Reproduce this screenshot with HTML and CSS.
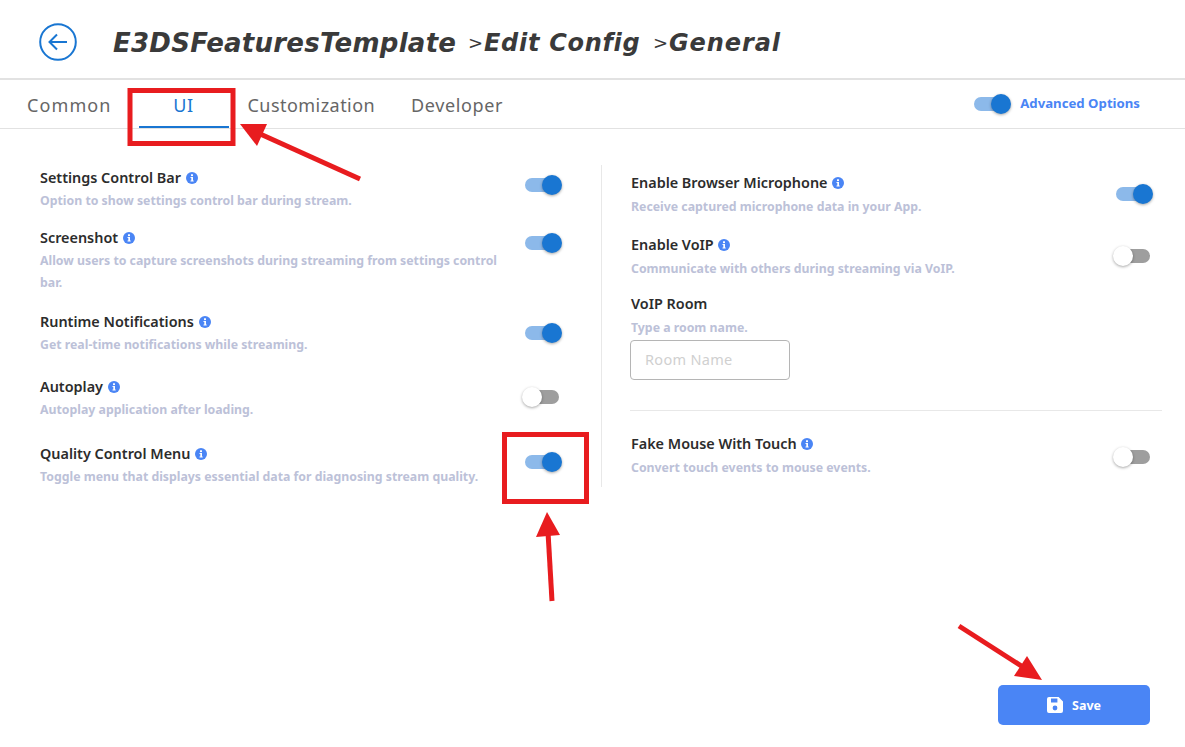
FILE: index.html
```html
<!DOCTYPE html>
<html lang="en">
<head>
    <meta charset="UTF-8">
    <title>Edit Config</title>
    <link rel="stylesheet" href="styles.css">
</head>
<body>
<svg class="defs" width="0" height="0">
    <symbol id="info" viewBox="0 0 12 12">
        <circle cx="6" cy="6" r="6" fill="#4a85f5"/>
        <rect x="5" y="2.3" width="2" height="1.8" fill="#fff"/>
        <path d="M4.5 5h2.5v3.6h.7v1H4.5v-1h.8V6h-.8z" fill="#fff"/>
    </symbol>
</svg>

<div class="page">
    <header class="header">
        <button class="back-btn">
            <svg width="38" height="38" viewBox="0 0 38 38" fill="none" stroke="#1976d2">
                <circle cx="19" cy="19" r="17.8" stroke-width="2"/>
                <path d="M28 19H11M18 11.5L10.5 19l7.5 7.5" stroke-width="2"/>
            </svg>
        </button>
        <h1 class="crumbs">
            <span class="crumb crumb-app">E3DSFeaturesTemplate</span>
            <span class="crumb-sep">&gt;</span>
            <span class="crumb crumb-edit">Edit Config</span>
            <span class="crumb-sep">&gt;</span>
            <span class="crumb crumb-general">General</span>
        </h1>
    </header>

    <nav class="tabs">
        <a class="tab tab-common">Common</a>
        <a class="tab tab-ui active">UI</a>
        <a class="tab tab-custom">Customization</a>
        <a class="tab">Developer</a>
        <div class="advanced">
            <span class="switch on"></span>
            <span class="advanced-label">Advanced Options</span>
        </div>
    </nav>

    <main class="content">
        <section class="col col-left">
            <div class="setting s1">
                <div class="setting-text">
                    <h4>Settings Control Bar <svg class="info"><use href="#info"/></svg></h4>
                    <p>Option to show settings control bar during stream.</p>
                </div>
                <span class="switch on"></span>
            </div>
            <div class="setting s2">
                <div class="setting-text">
                    <h4>Screenshot <svg class="info"><use href="#info"/></svg></h4>
                    <p>Allow users to capture screenshots during streaming from settings control bar.</p>
                </div>
                <span class="switch on"></span>
            </div>
            <div class="setting s3">
                <div class="setting-text">
                    <h4>Runtime Notifications <svg class="info"><use href="#info"/></svg></h4>
                    <p>Get real-time notifications while streaming.</p>
                </div>
                <span class="switch on"></span>
            </div>
            <div class="setting s4">
                <div class="setting-text">
                    <h4>Autoplay <svg class="info"><use href="#info"/></svg></h4>
                    <p>Autoplay application after loading.</p>
                </div>
                <span class="switch"></span>
            </div>
            <div class="setting s5">
                <div class="setting-text">
                    <h4>Quality Control Menu <svg class="info"><use href="#info"/></svg></h4>
                    <p>Toggle menu that displays essential data for diagnosing stream quality.</p>
                </div>
                <span class="switch on"></span>
            </div>
        </section>

        <section class="col col-right">
            <div class="setting r1">
                <div class="setting-text">
                    <h4>Enable Browser Microphone <svg class="info"><use href="#info"/></svg></h4>
                    <p>Receive captured microphone data in your App.</p>
                </div>
                <span class="switch on"></span>
            </div>
            <div class="setting r2">
                <div class="setting-text">
                    <h4>Enable VoIP <svg class="info"><use href="#info"/></svg></h4>
                    <p>Communicate with others during streaming via VoIP.</p>
                </div>
                <span class="switch"></span>
            </div>
            <div class="room">
                <h4>VoIP Room</h4>
                <p>Type a room name.</p>
                <input class="room-input" type="text" placeholder="Room Name">
            </div>
            <div class="setting r3">
                <div class="setting-text">
                    <h4>Fake Mouse With Touch <svg class="info"><use href="#info"/></svg></h4>
                    <p>Convert touch events to mouse events.</p>
                </div>
                <span class="switch"></span>
            </div>
        </section>
    </main>

    <footer class="footer">
        <button class="save-btn">
            <svg width="16" height="16" viewBox="0 0 16 16">
                <path fill-rule="evenodd" fill="#fff" d="M2 0h9.6L16 4.400V14a2 2 0 0 1-2 2H2a2 2 0 0 1-2-2V2a2 2 0 0 1 2-2zM4 1.600V5.600h6.400V1.600zM8 8.600a2.400 2.400 0 1 0 0 4.800 2.400 2.400 0 0 0 0-4.800z"/>
            </svg>
            Save
        </button>
    </footer>

    <!-- red markup drawn on top of the screenshot -->
    <svg class="markup" width="1185" height="747" viewBox="0 0 1185 747">
        <g fill="none" stroke="#e81c1f" stroke-width="5">
            <rect x="130" y="90.500" width="103" height="53"/>
            <rect x="504.500" y="434.500" width="82" height="67"/>
            <path d="M360 179L258 133"/>
            <path d="M552 601L548 532"/>
            <path d="M959 626L1026 669"/>
        </g>
        <g fill="#e81c1f">
            <path d="M240 124L267 124L257 146z"/>
            <path d="M547 512L536 537L560 535z"/>
            <path d="M1042 680L1027 656L1014 676z"/>
        </g>
    </svg>
</div>
</body>
</html>
```

FILE: styles.css
```css
* {
    box-sizing: border-box;
}
body {
    margin: 0;
    background-color: #fff;
    font-family: "Noto Sans", sans-serif;
}
.defs {
    position: absolute;
}
.page {
    position: relative;
    width: 1185px;
    height: 747px;
    display: flex;
    flex-direction: column;
    overflow: hidden;
}
.markup {
    position: absolute;
    left: 0;
    top: 0;
    pointer-events: none;
}

/* header */
.header {
    height: 80px;
    display: flex;
    align-items: center;
    padding: 5px 0 0 39px;
    border-bottom: 2px solid #e2e2e2;
}
.back-btn {
    width: 38px;
    height: 38px;
    padding: 0;
    border: none;
    background: none;
}
.crumbs {
    margin: 2px 0 0 36px;
    display: flex;
    align-items: center;
    font-family: "DejaVu Sans", sans-serif;
    font-size: 26px;
    font-style: italic;
    font-weight: 700;
    color: #3a3a3a;
}
.crumb-app {
    width: 343px;
    letter-spacing: 0.25px;
}
.crumb-edit {
    width: 157px;
    font-size: 24px;
    letter-spacing: 0.7px;
}
.crumb-general {
    font-size: 24px;
    letter-spacing: 0.9px;
}
.crumb-sep {
    width: 28px;
    padding-left: 12px;
    font-size: 18px;
    font-style: normal;
    font-weight: 400;
}

/* tabs */
.tabs {
    height: 49px;
    display: flex;
    padding-left: 9px;
    border-bottom: 1px solid #e2e2e2;
}
.tab {
    padding: 0 18px;
    height: 48px;
    line-height: 50px;
    font-size: 18px;
    letter-spacing: 0.6px;
    color: #666;
    text-align: center;
}
.tab-common {
    margin-right: 9px;
    letter-spacing: 1.1px;
}
.tab-ui {
    width: 90px;
    margin-right: 1px;
}
.tab-custom {
    padding-right: 18px;
    letter-spacing: 0.45px;
}
.tab.active {
    color: #1976d2;
    border-bottom: 2px solid #1976d2;
}
.advanced {
    margin-left: auto;
    padding-right: 45px;
    display: flex;
    align-items: center;
    gap: 12px;
}
.advanced-label {
    position: relative;
    top: -1px;
    font-size: 13.2px;
    font-weight: 700;
    color: #4a85f5;
}

/* switches */
.switch {
    position: relative;
    flex: none;
    display: block;
    width: 34px;
    height: 14px;
    border-radius: 7px;
    background-color: #9e9e9e;
}
.switch::after {
    content: "";
    position: absolute;
    left: -3px;
    top: -3px;
    width: 20px;
    height: 20px;
    border-radius: 50%;
    background-color: #fff;
    box-shadow: 0 1px 3px rgba(0,0,0,0.35);
}
.switch.on {
    background-color: #8cb9ea;
}
.switch.on::after {
    left: 17px;
    background-color: #1976d2;
}

/* settings */
.content {
    display: flex;
    padding: 36px 23px 0 40px;
}
.col-left {
    width: 562px;
    padding-right: 42px;
    border-right: 1px solid #e8e8e8;
    height: 322px;
}
.col-right {
    flex: 1;
    padding-left: 28px;
}
.setting {
    display: flex;
    justify-content: space-between;
    align-items: flex-start;
}
.setting-text {
    width: 465px;
}
.setting .switch {
    margin: 13px 0 0 0;
}
h4 {
    margin: 0;
    height: 25px;
    line-height: 25px;
    font-size: 14.4px;
    font-weight: 600;
    color: #2c2c2c;
}
.setting-text p, .room p {
    margin: 0;
    line-height: 22px;
    font-size: 12.3px;
    font-weight: 700;
    color: #bcc1d8;
}
.info {
    width: 12px;
    height: 12px;
    margin-left: 1px;
    vertical-align: -1px;
}
.s1 { height: 60px; }
.s2 { height: 84px; }
.s3 { height: 65px; }
.s4 { height: 67px; }
.s2 .switch { margin-top: 11px; }
.s3 .switch { margin-top: 17px; }
.s4 .switch { margin-top: 16px; }
.s5 .switch { margin-top: 14px; }

.col-right .setting {
    padding-right: 12px;
}
.col-right .setting-text, .room h4, .room p {
    padding-left: 1px;
}
.col-right .setting h4 {
    height: 26px;
}
.r1 { height: 62px; padding-top: 5px; }
.r2 { height: 62px; padding-top: 5px; }
.r1 .switch { margin-top: 17px; }
.r2 .switch { margin-top: 17px; }
.room {
    height: 122px;
    padding-top: 2px;
    border-bottom: 1px solid #e8e8e8;
}
.room p {
    height: 24px;
    padding-top: 1px;
}
.room-input {
    display: block;
    width: 160px;
    height: 40px;
    padding: 0 14px 2px;
    border: 1px solid #b5b5b5;
    border-radius: 4px;
    font-family: inherit;
    font-size: 14.5px;
    letter-spacing: 0.3px;
}
.room-input::placeholder {
    color: #d0d0d0;
}
.r3 {
    margin-top: 20px;
}
.r3 .switch { margin-top: 19px; }

/* footer */
.footer {
    margin-top: auto;
    display: flex;
    justify-content: flex-end;
    padding: 0 35px 22px 0;
}
.save-btn {
    width: 152px;
    height: 40px;
    display: flex;
    align-items: center;
    justify-content: center;
    gap: 9px;
    border: none;
    border-radius: 5px;
    background-color: #4a85f5;
    color: #fff;
    font-family: inherit;
    font-size: 12.500px;
    font-weight: 700;
    cursor: pointer;
}
```
